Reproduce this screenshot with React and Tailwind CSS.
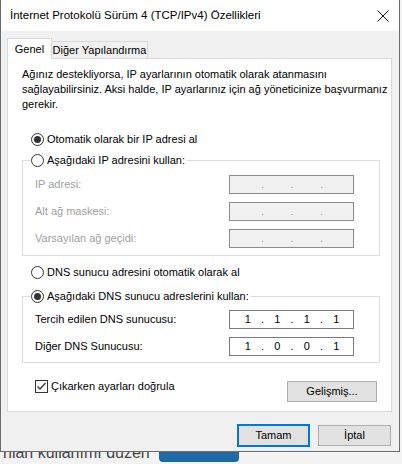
import React from "react";

const font = { fontFamily: '"Liberation Sans", "Segoe UI", Arial, sans-serif' };

const Radio = ({ checked, label }) => (
  <div className="flex items-center gap-[3px] bg-white pr-[2px] h-[15px]">
    <span className="w-[13px] h-[13px] rounded-full border border-[#333] bg-white flex items-center justify-center">
      {checked && <span className="w-[7px] h-[7px] rounded-full bg-[#333]" />}
    </span>
    <span className="text-black whitespace-nowrap">{label}</span>
  </div>
);

const IpBox = ({ values, disabled }) => (
  <div
    className={
      "w-[125px] h-[19px] border flex items-center pl-[3px] " +
      (disabled ? "border-[#8c8c8c] bg-[#f0f0f0] text-[#a0a0a0]" : "border-[#7a7a7a] bg-white text-black")
    }
  >
    {[0, 1, 2, 3].map((i) => (
      <React.Fragment key={i}>
        <span className="w-[29.5px] text-center leading-none">{values ? values[i] : ""}</span>
        {i < 3 && <span className="w-0 flex justify-center leading-none">.</span>}
      </React.Fragment>
    ))}
  </div>
);

const Row = ({ label, values, disabled }) => (
  <div className="flex items-center justify-between h-[19px]">
    <span className={disabled ? "text-[#a0a0a0]" : "text-black"}>{label}</span>
    <IpBox values={values} disabled={disabled} />
  </div>
);

const Group = ({ legend, children, top, pb }) => (
  <div className={"w-[358px] border border-[#dcdcdc] pl-[12px] pr-[25px] " + top + " " + pb}>
    <div className="-mt-[8px] -ml-[4px] w-fit">{legend}</div>
    {children}
  </div>
);

export default function App() {
  return (
    <div className="w-[402px] h-[464px] bg-[#f3f3f3] overflow-hidden text-[11px] leading-[15px]" style={font}>
      <div className="w-[400px] h-[452px] border-l border-r border-b border-[#6b6b6b] bg-[#f0f0f0] flex flex-col">
        {/* title bar */}
        <div className="h-[31px] bg-white flex items-center justify-between pl-[9px] pr-[10px]">
          <span className="text-black text-[11.5px]">İnternet Protokolü Sürüm 4 (TCP/IPv4) Özellikleri</span>
          <svg width="12" height="12" viewBox="0 0 12 12">
            <path d="M0.5 0.5 L11.5 11.5 M11.5 0.5 L0.5 11.5" stroke="#111" strokeWidth="1" />
          </svg>
        </div>

        {/* tabs */}
        <div className="flex items-end pl-[6px] pt-[7px] h-[27px] relative z-10">
          <div className="h-[21px] -mb-px w-[45px] justify-center bg-white border border-b-0 border-[#d9d9d9] flex items-start pt-[3px]">
            Genel
          </div>
          <div className="h-[17px] w-[96px] justify-center border border-l-0 border-b-0 border-[#d9d9d9] bg-[#f0f0f0] flex items-center">
            Diğer Yapılandırma
          </div>
        </div>

        {/* panel */}
        <div className="ml-[6px] w-[385px] h-[354px] bg-white border border-[#d9d9d9] pt-[8px] pl-[14px] pr-[11px] flex flex-col">
          <p className="text-black whitespace-nowrap">
            Ağınız destekliyorsa, IP ayarlarının otomatik olarak atanmasını
            <br />
            sağlayabilirsiniz. Aksi halde, IP ayarlarınız için ağ yöneticinize başvurmanız
            <br />
            gerekir.
          </p>

          <div className="mt-[20px] ml-[9px]">
            <Radio checked label="Otomatik olarak bir IP adresi al" />
          </div>

          <Group top="mt-[13px]" pb="pb-[7px]" legend={<Radio label="Aşağıdaki IP adresini kullan:" />}>
            <div className="flex flex-col gap-[8px] mt-[7px]">
              <Row label="IP adresi:" disabled />
              <Row label="Alt ağ maskesi:" disabled />
              <Row label="Varsayılan ağ geçidi:" disabled />
            </div>
          </Group>

          <div className="mt-[9px] ml-[9px]">
            <Radio label="DNS sunucu adresini otomatik olarak al" />
          </div>

          <Group top="mt-[16px]" pb="pb-[6px]" legend={<Radio checked label="Aşağıdaki DNS sunucu adreslerini kullan:" />}>
            <div className="flex flex-col gap-[8px] mt-[6px]">
              <Row label="Tercih edilen DNS sunucusu:" values={["1", "1", "1", "1"]} />
              <Row label="Diğer DNS Sunucusu:" values={["1", "0", "0", "1"]} />
            </div>
          </Group>

          <div className="mt-[17px] flex items-start justify-between pl-[13px] pr-[3px]">
            <div className="flex items-center gap-[3px] h-[13px]">
              <span className="w-[13px] h-[13px] border border-[#333] bg-white flex items-center justify-center">
                <svg width="11" height="11" viewBox="0 0 11 11">
                  <path d="M1.5 5.5 L4 8 L9.5 2" stroke="#333" strokeWidth="1.3" fill="none" />
                </svg>
              </span>
              <span>Çıkarken ayarları doğrula</span>
            </div>
            <button className="mt-[1px] w-[90px] h-[21px] bg-[#e1e1e1] border border-[#adadad] text-black">
              Gelişmiş...
            </button>
          </div>
        </div>

        {/* bottom buttons */}
        <div className="flex justify-end gap-[8px] pr-[8px] mt-[12px]">
          <button className="w-[73px] h-[23px] bg-[#e1e1e1] border-2 border-[#0078d7] text-black">Tamam</button>
          <button className="w-[73px] h-[21px] mt-[1px] bg-[#e1e1e1] border border-[#adadad] text-black">İptal</button>
        </div>
      </div>

      {/* background page below the dialog */}
      <div className="h-[12px] overflow-hidden flex items-start">
        <span className="-mt-[7px] pl-[3px] text-[16px] leading-[16px] text-[#444] whitespace-nowrap w-[150px] overflow-hidden">
          nlan kullanımı düzenlenir
        </span>
        <span className="ml-[9px] -mt-[10px] w-[80px] h-[20px] rounded-[4px] bg-[#1f6aa5]" />
      </div>
    </div>
  );
}
